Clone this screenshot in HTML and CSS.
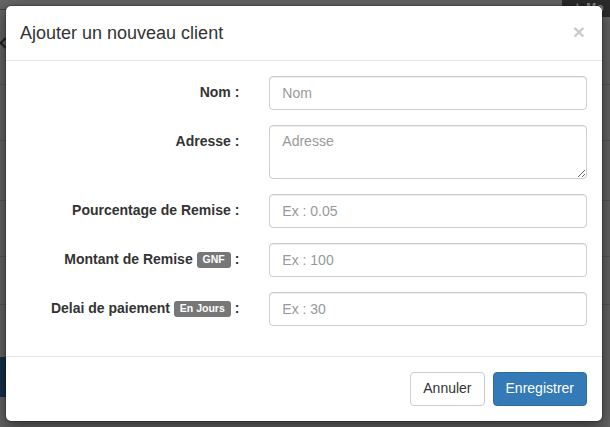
FILE: index.html
```html
<!DOCTYPE html>
<html lang="fr">
<head>
<meta charset="utf-8">
<title>Ajouter un nouveau client</title>
<link rel="stylesheet" href="styles.css">
</head>
<body>
<div class="page">
  <div class="topbar">
    <span class="nav-back"></span>
    <span class="top-btn">&#9733; Mo</span>
  </div>
  <div class="page-row r1"></div>
  <div class="page-row r2"></div>
  <div class="page-row r3"></div>
  <div class="page-row r4"></div>
  <div class="page-row r5"></div>
  <div class="page-navy"></div>
</div>

<div class="modal">
  <div class="modal-header">
    <h4 class="modal-title">Ajouter un nouveau client</h4>
    <span class="close">&times;</span>
  </div>
  <form class="modal-body">
    <div class="form-group">
      <label class="control-label">Nom :</label>
      <div class="field"><input class="form-control" type="text" placeholder="Nom"></div>
    </div>
    <div class="form-group">
      <label class="control-label">Adresse :</label>
      <div class="field"><textarea class="form-control area" placeholder="Adresse"></textarea></div>
    </div>
    <div class="form-group">
      <label class="control-label">Pourcentage de Remise :</label>
      <div class="field"><input class="form-control" type="text" placeholder="Ex : 0.05"></div>
    </div>
    <div class="form-group">
      <label class="control-label">Montant de Remise <span class="badge">GNF</span> :</label>
      <div class="field"><input class="form-control" type="text" placeholder="Ex : 100"></div>
    </div>
    <div class="form-group">
      <label class="control-label">Delai de paiement <span class="badge">En Jours</span> :</label>
      <div class="field"><input class="form-control" type="text" placeholder="Ex : 30"></div>
    </div>
  </form>
  <div class="modal-footer">
    <button class="btn btn-default" type="button">Annuler</button>
    <button class="btn btn-primary" type="button">Enregistrer</button>
  </div>
</div>
</body>
</html>
```

FILE: styles.css
```css
* { box-sizing: border-box; }

html, body {
  margin: 0;
  height: 100%;
}

body {
  background: #656565;
  font-family: "Liberation Sans", Arial, sans-serif;
  font-size: 14px;
  line-height: 1.42857;
  color: #333;
  overflow: hidden;
  position: relative;
}

/* dimmed page behind the modal */
.page {
  height: 427px;
  display: flex;
  flex-direction: column;
}

.topbar {
  height: 18px;
  margin-top: -8px;
  display: flex;
  justify-content: space-between;
  align-items: flex-start;
  border-bottom: 1px solid #3f3f3f;
}

.nav-back {
  width: 8px;
  height: 8px;
  margin-top: 47px;
  margin-left: 1px;
  border-left: 2px solid #222;
  border-bottom: 2px solid #222;
  transform: rotate(45deg);
}

.top-btn {
  width: 48px;
  height: 25px;
  background: #2b2b2b;
  color: #8a8a8a;
  font-size: 12px;
  font-weight: bold;
  line-height: 14px;
  padding: 9px 0 0 10px;
  white-space: nowrap;
  overflow: hidden;
}

.page-row {
  border-bottom: 1px solid #585858;
}
.r1 { height: 75px; }
.r2 { height: 56px; }
.r3 { height: 60px; }
.r4 { height: 56px; }
.r5 { height: 48px; }

.page-navy {
  margin-top: 52px;
  height: 40px;
  width: 40px;
  background: #15314a;
}

/* modal */
.modal {
  position: absolute;
  left: 5px;
  top: 5px;
  width: 598px;
  background: #fff;
  border: 1px solid rgba(0, 0, 0, 0.2);
  border-radius: 6px;
  box-shadow: 0 5px 15px rgba(0, 0, 0, 0.5);
  background-clip: padding-box;
}

.modal-header {
  padding: 15px;
  border-bottom: 1px solid #e5e5e5;
  display: flex;
  justify-content: space-between;
  align-items: flex-start;
}

.modal-title {
  margin: 0 0 0 -1px;
  font-size: 18px;
  font-weight: normal;
  line-height: 24px;
  color: #333;
}

.close {
  font-size: 21px;
  font-weight: bold;
  line-height: 1;
  color: #000;
  opacity: 0.2;
  margin-top: 0;
  margin-right: 2px;
}

.modal-body {
  margin: 0;
  padding: 15px;
}

.form-group {
  display: grid;
  grid-template-columns: 5fr 7fr;
  margin: 0 -15px 15px;
}

.control-label {
  padding: 7px 15px 0;
  text-align: right;
  font-weight: bold;
  color: #333;
}

.field {
  padding: 0 15px;
}

.form-control {
  display: block;
  width: 100%;
  height: 34px;
  padding: 6px 12px;
  font-family: "Liberation Sans", Arial, sans-serif;
  font-size: 14px;
  line-height: 1.42857;
  color: #555;
  background: #fff;
  border: 1px solid #ccc;
  border-radius: 4px;
  box-shadow: inset 0 1px 1px rgba(0, 0, 0, 0.075);
  margin: 0;
}

.form-control::placeholder {
  color: #999;
  opacity: 1;
}

.area {
  height: 54px;
  resize: vertical;
}

.badge {
  display: inline-block;
  background: #777;
  color: #fff;
  font-size: 10.5px;
  font-weight: bold;
  line-height: 1;
  padding: 2px 6px 3px;
  border-radius: 3px;
  vertical-align: 1px;
}

.modal-footer {
  padding: 15px;
  border-top: 1px solid #e5e5e5;
  display: flex;
  justify-content: flex-end;
  gap: 8px;
}

.btn {
  height: 34px;
  padding: 6px 12px;
  font-family: "Liberation Sans", Arial, sans-serif;
  font-size: 14px;
  line-height: 1.42857;
  border: 1px solid transparent;
  border-radius: 4px;
  margin: 0;
}

.btn-default {
  background: #fff;
  color: #333;
  border-color: #ccc;
}

.btn-primary {
  background: #337ab7;
  color: #fff;
  border-color: #2e6da4;
}
```
